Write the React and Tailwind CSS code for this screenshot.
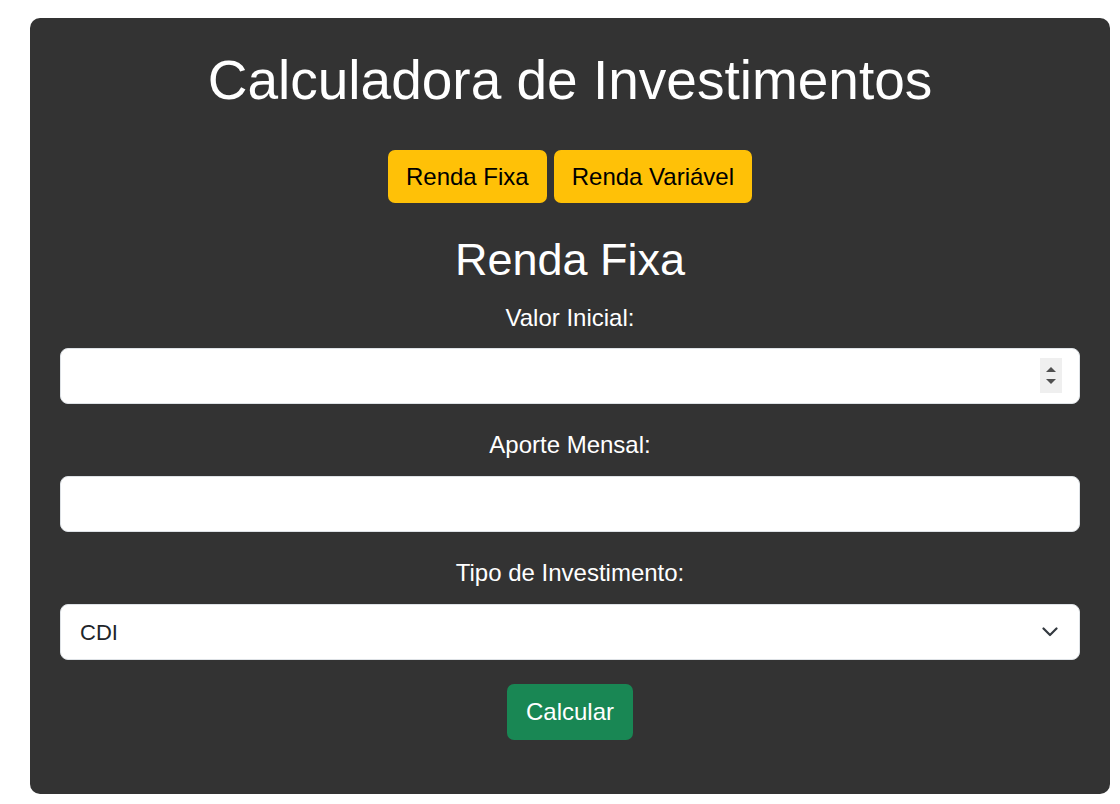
import React from "react";

export default function App() {
  return (
    <div className="min-h-[804px] w-[1120px] bg-white pt-[18px] pl-[30px] font-['Liberation_Sans',Arial,sans-serif]">
      <div className="w-[1080px] h-[776px] rounded-[10px] bg-[#333333] px-[30px] pt-[31px] flex flex-col items-center text-white">
        <h1 className="text-[55px] leading-[63px] font-normal text-center">Calculadora de Investimentos</h1>
        <div className="mt-[38px] flex gap-[7px]">
          <button className="h-[53px] px-[18px] rounded-[7px] bg-[#ffc107] text-black text-[24px] leading-none">Renda Fixa</button>
          <button className="h-[53px] px-[18px] rounded-[7px] bg-[#ffc107] text-black text-[24px] leading-none">Renda Variável</button>
        </div>
        <h2 className="mt-[31px] text-[45px] leading-[52px] font-normal text-center">Renda Fixa</h2>

        <label className="mt-[18px] text-[24px] leading-[28px] text-center">Valor Inicial:</label>
        <div className="relative mt-[16px] w-full">
          <input type="text" className="block w-full h-[56px] rounded-[8px] border border-[#dee2e6] bg-white px-[19px] text-[22px] text-[#212529] outline-none" />
          <div className="absolute right-[18px] top-[10px] w-[22px] h-[35px] bg-[#efefef] flex flex-col items-center justify-center gap-[7px]">
            <svg width="10" height="5" viewBox="0 0 10 5"><path d="M0 5 L5 0 L10 5 Z" fill="#505050" /></svg>
            <svg width="10" height="5" viewBox="0 0 10 5"><path d="M0 0 L5 5 L10 0 Z" fill="#505050" /></svg>
          </div>
        </div>

        <label className="mt-[27px] text-[24px] leading-[28px] text-center">Aporte Mensal:</label>
        <input type="text" className="mt-[17px] block w-full h-[56px] rounded-[8px] border border-[#dee2e6] bg-white px-[19px] text-[22px] text-[#212529] outline-none" />

        <label className="mt-[27px] text-[24px] leading-[28px] text-center">Tipo de Investimento:</label>
        <div className="relative mt-[17px] w-full">
          <select className="block w-full h-[56px] appearance-none rounded-[8px] border border-[#dee2e6] bg-white pl-[19px] pr-[50px] text-[22px] text-[#212529] outline-none font-['Liberation_Sans',Arial,sans-serif]" defaultValue="CDI">
            <option>CDI</option>
            <option>Poupança</option>
            <option>Tesouro Direto</option>
          </select>
          <svg className="pointer-events-none absolute right-[22px] top-[23px]" width="16" height="10" viewBox="0 0 16 10">
            <path d="M1.5 1.5 L8 8 L14.5 1.5" fill="none" stroke="#343a40" strokeWidth="2.2" strokeLinecap="round" strokeLinejoin="round" />
          </svg>
        </div>

        <button className="mt-[24px] h-[56px] px-[19px] rounded-[7px] bg-[#198754] text-white text-[24px] leading-none">Calcular</button>
      </div>
    </div>
  );
}
